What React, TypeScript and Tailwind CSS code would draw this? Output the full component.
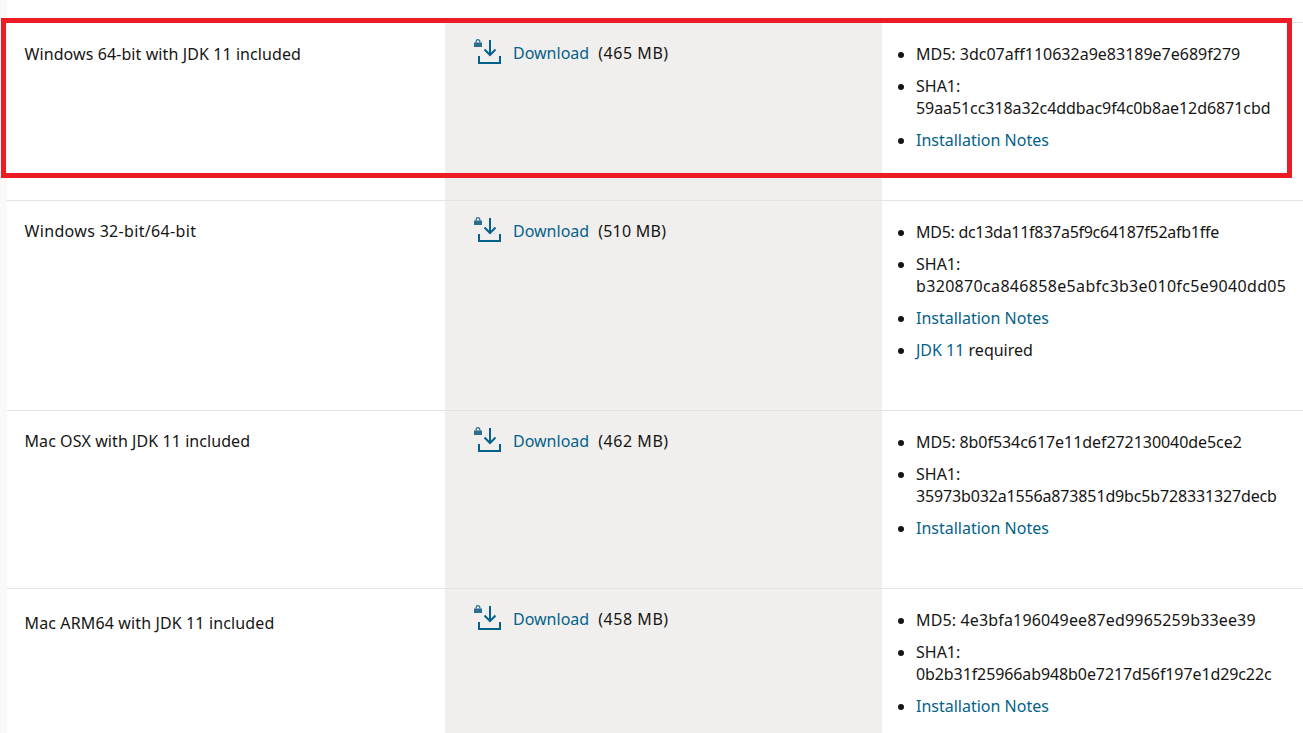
const rows = [
  { name: "Windows 64-bit with JDK 11 included", size: "465 MB", md5: "3dc07aff110632a9e83189e7e689f279", sha: "59aa51cc318a32c4ddbac9f4c0b8ae12d6871cbd", h: "h-[178px]", nameCls: "pt-[21px] tracking-[0.09px]", sizeCls: "tracking-[0.55px]", md5Cls: "tracking-normal", shaCls: "tracking-[-0.075px]", jdk: false },
  { name: "Windows 32-bit/64-bit", size: "510 MB", md5: "dc13da11f837a5f9c64187f52afb1ffe", sha: "b320870ca846858e5abfc3b3e010fc5e9040dd05", h: "h-[210px]", nameCls: "pt-[20px] tracking-[0.33px]", sizeCls: "tracking-[0.25px]", md5Cls: "tracking-[-0.28px]", shaCls: "tracking-[0.33px]", jdk: true },
  { name: "Mac OSX with JDK 11 included", size: "462 MB", md5: "8b0f534c617e11def272130040de5ce2", sha: "35973b032a1556a873851d9bc5b728331327decb", h: "h-[178px]", nameCls: "pt-[20px] tracking-[0.07px]", sizeCls: "tracking-[0.55px]", md5Cls: "tracking-[-0.06px]", shaCls: "tracking-[-0.15px]", jdk: false },
  { name: "Mac ARM64 with JDK 11 included", size: "458 MB", md5: "4e3bfa196049ee87ed9965259b33ee39", sha: "0b2b31f25966ab948b0e7217d56f197e1d29c22c", h: "h-[178px]", nameCls: "pt-[24px] tracking-[0.13px]", sizeCls: "tracking-[0.55px]", md5Cls: "tracking-[0.15px]", shaCls: "tracking-[-0.1px]", jdk: false },
];

function DownloadIcon() {
  return (
    <svg width="30" height="31" viewBox="0 0 30 31" className="shrink-0" fill="none">
      <rect x="1" y="8.5" width="8" height="4.5" fill="#2c6e8f" />
      <path d="M3.2 8.5V7.5a1.8 1.8 0 0 1 3.6 0v1" stroke="#2c6e8f" strokeWidth="1.3" />
      <path d="M17 6v15M11.5 15.5l5.5 5.5 5.5-5.5" stroke="#04628a" strokeWidth="2" />
      <path d="M6 22v7h21v-7" stroke="#04628a" strokeWidth="2" />
    </svg>
  );
}

export default function App() {
  return (
    <div className="relative h-[733px] w-[1303px] overflow-hidden bg-[#fbf9f8] pl-[7px] font-['Noto_Sans',sans-serif] text-base text-[#161513]">
      <div className="h-full bg-white pt-[22px]">
        {rows.map((r) => (
          <div key={r.name} className={`flex border-t border-[#e4e3e1] ${r.h}`}>
            <div className={`w-[438px] pl-[17.5px] leading-5 ${r.nameCls}`}>{r.name}</div>
            <div className="flex w-[437px] items-start gap-[10px] bg-[#f1efed] pl-[28px] pt-[11px]">
              <DownloadIcon />
              <div className="pt-[9px] leading-5">
                <span className="text-[#04628a]">Download</span>
                <span className={`ml-[9px] ${r.sizeCls}`}>({r.size})</span>
              </div>
            </div>
            <ul className="flex-1 list-disc pl-[34px] pt-[20px] leading-[22px] marker:text-[#161513]">
              <li className="mb-[10px]"><span className={r.md5Cls}>MD5: {r.md5}</span></li>
              <li className="mb-[10px]">
                SHA1:
                <br />
                <span className={r.shaCls}>{r.sha}</span>
              </li>
              <li className="mb-[10px] text-[#04628a]">Installation Notes</li>
              {r.jdk && (
                <li className="mb-[10px]">
                  <span className="text-[#04628a]">JDK 11</span> required
                </li>
              )}
            </ul>
          </div>
        ))}
      </div>
      <div className="pointer-events-none absolute left-[1px] top-[18px] h-[160px] w-[1291px] border-[5px] border-[#ed1c24]" />
    </div>
  );
}
